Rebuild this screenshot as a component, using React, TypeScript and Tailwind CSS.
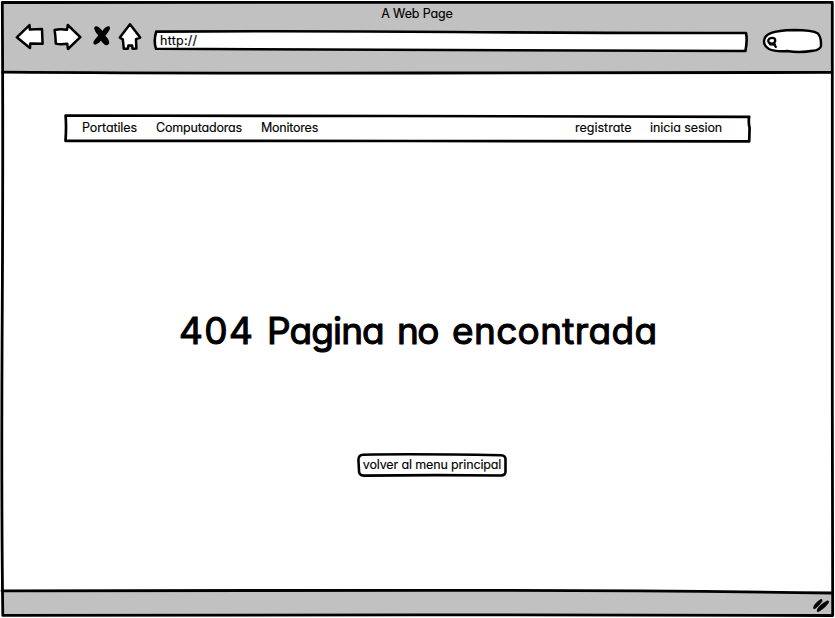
import type { ReactNode } from "react";

type StrokeProps = { d: string; w?: number; fill?: string };

function Ink({ d, w = 2.8, fill = "none" }: StrokeProps) {
  return <path d={d} fill={fill} stroke="#000" strokeWidth={w} strokeLinecap="round" strokeLinejoin="round" />;
}

// Hand-drawn outline that sits behind the content of its box.
function Sketch({ children }: { children: ReactNode }) {
  return <svg className="pointer-events-none absolute inset-0 h-full w-full overflow-visible">{children}</svg>;
}

function Toolbar() {
  return (
    <div className="flex h-[50px] items-start">
      <svg className="ml-[14px] h-[32px] w-[30px]" viewBox="14 22 30 32">
        <Ink fill="#fff" w={2.5} d="M16.8 37.3 L29.5 25.2 L29.8 29.6 L42 29 L42.6 43.7 L30.3 43.6 L30 48 Z" />
      </svg>
      <svg className="ml-[8px] h-[32px] w-[30px]" viewBox="52 22 30 32">
        <Ink fill="#fff" w={2.5} d="M54.6 30 Q60 28.5 67 29.8 L67.8 25 L80.3 37.2 L68 49 L67.2 43.8 Q60 44.6 55.8 43.6 Q55.6 36 54.6 30 Z" />
      </svg>
      <svg className="ml-[10px] h-[28px] w-[20px]" viewBox="92 22 20 28">
        <path d="M94.3 27.2 Q96 25.2 98.8 27.2 Q101.2 29 102.4 31 Q105 26.2 109 26.2 Q110.8 27.2 109.5 30 L105.4 36 Q109 39 109.3 43 Q108.2 46 105 45 Q102.5 43 101 40.8 Q98.5 44 95.3 44.8 Q92.5 44 93.7 41.2 Q96 38 98.3 35.6 Q93.8 30.5 94.3 27.2 Z" fill="#000" />
      </svg>
      <svg className="ml-[5px] h-[30px] w-[26px]" viewBox="117 22 26 30">
        <Ink fill="#fff" w={2.5} d="M130 24.3 L140.2 37.6 L136 39.2 L136.4 48.6 L132.6 48.8 L132.2 45.6 L128.4 45.6 L127.8 48.8 L123.8 48.8 L122.8 39.3 L119.8 37.6 Z" />
      </svg>
      <div className="relative ml-[10px] mt-[8px] flex h-[22px] w-[596px] items-center pl-[7px]">
        <Sketch>
          <Ink fill="#fff" w={2.6} d="M3.2 1.6 Q150 .8 300 2 T593 3 Q594.6 10 592.4 21 Q440 20.4 295 20 T3 18.8 Q.4 11 3.2 1.6 Z" />
        </Sketch>
        <span className="relative whitespace-nowrap text-[12.5px] leading-4 tracking-[.25px]">http://</span>
      </div>
      <svg className="ml-[11px] mt-[4px] h-[30px] w-[64px]" viewBox="760 26 64 30">
        <Ink fill="#fff" w={2.4} d="M764 41.5 C764 34 772 30.5 794 30 C806 30 814 31 818 33.5 Q821.5 38 821 46 Q820 50 813 50.8 Q800 53 787 51 Q775 51.8 769 49 Q764 46 764 41.5 Z" />
        <Ink w={2.3} d="M769.2 38.8 Q772 37 774.8 38.7 Q776 41 774 43 Q771 44.3 768.8 42.5 Q767.6 40.5 769.2 38.8 M773.5 43.3 L775.8 46.9 M770 44.4 L775 44.5" />
      </svg>
    </div>
  );
}

function Navigation() {
  return (
    <nav className="relative ml-[64px] mt-[41px] flex h-[28px] w-[687px] items-center text-[12.5px] leading-4">
      <Sketch>
        <Ink w={2.7} fill="#fff" d="M1.6 1.5 Q170 1.2 330 2 T685.2 2.8 Q684.2 8 685.6 14 L685.2 27.4 Q520 27.6 350 27 T1.5 26.8 Q2.5 13 1.6 1.5 Z" />
      </Sketch>
      <a className="relative ml-[18px] w-[74px] whitespace-nowrap tracking-[-.1px]">Portatiles</a>
      <a className="relative w-[105px] whitespace-nowrap tracking-[-.18px]">Computadoras</a>
      <a className="relative whitespace-nowrap tracking-[-.22px]">Monitores</a>
      <a className="relative ml-auto w-[75px] whitespace-nowrap">registrate</a>
      <a className="relative w-[101px] whitespace-nowrap tracking-[-.08px]">inicia sesion</a>
    </nav>
  );
}

export default function App() {
  return (
    <div
      className="relative flex h-[618px] w-[835px] flex-col overflow-hidden bg-white text-black [font-feature-settings:'cv11'] [-webkit-text-stroke:0.15px_black]"
      style={{ fontFamily: 'Inter, "Liberation Sans", sans-serif' }}
    >
      <header className="relative h-[73px] shrink-0">
        <Sketch>
          <path d="M2 2 H832.5 V72.5 H2 Z" fill="#c1c1c1" />
          <Ink d="M2.5 72.2 Q180 73.5 420 73 T832 72.4" />
        </Sketch>
        <div className="relative pt-[6px] pr-px text-center text-[12.5px] leading-4 tracking-[-.12px]">A Web Page</div>
        <div className="relative"><Toolbar /></div>
      </header>
      <main className="flex h-[517px] shrink-0 flex-col">
        <Navigation />
        <h1 className="ml-[179px] mt-[165px] flex whitespace-nowrap text-[37px] font-normal leading-[48px] [-webkit-text-stroke:1.1px_black]">
          <span className="w-[88px] tracking-[1.4px]">404 </span>
          <span className="w-[130px] tracking-[-.9px]">Pagina </span>
          <span className="w-[55px] tracking-[-1.5px]">no </span>
          <span className="tracking-[.35px]">encontrada</span>
        </h1>
        <button className="relative ml-[357px] mt-[98px] flex h-[24px] w-[150px] items-center justify-center">
          <Sketch>
            <Ink w={2.6} fill="#fff" d="M6 1.7 Q60 .7 144 2.3 Q149 2.5 148.5 7 L148.5 18 Q149 22.2 144 22.5 Q75 21.7 7 22.6 Q1.5 22.6 2 17 L1.4 7 Q1.5 2 6 1.7 Z" />
          </Sketch>
          <span className="whitespace-nowrap text-[12.5px] leading-4 tracking-[-.14px] relative">volver al menu principal</span>
        </button>
      </main>
      <footer className="relative flex h-[28px] shrink-0 items-start justify-end">
        <Sketch>
          <path d="M2 1 L440 0 L832 3 V26 H2 Z" fill="#c1c1c1" />
          <Ink d="M2 .8 Q230 1 440 .3 Q650 .2 832 3" />
        </Sketch>
        <svg className="relative mr-[4px] mt-[7px] h-[17px] w-[19px]" viewBox="812 597 19 17">
          <path
            d="M813.4 608.2 Q814 603.5 821 599.2 Q822.8 599.2 821.8 601.5 Q819 606 815.6 608.2 Q814 609.2 813.4 608.2 Z M817 611 Q817.5 606 827 600.9 Q829.7 600.6 828.4 603 Q825.5 607.5 818.8 611.5 Q817.5 612.2 817 611 Z"
            fill="#000"
            stroke="#000"
            strokeWidth={0.6}
          />
        </svg>
      </footer>
      <Sketch>
        <Ink d="M2.3 2.5 Q200 2 420 2.3 T832.3 2.3 Q831.8 250 832.3 400 L832.7 615.5 Q600 614.8 420 614.8 T2.8 615.4 Q1.2 500 2.2 320 T2.3 2.5 Z" />
      </Sketch>
    </div>
  );
}
